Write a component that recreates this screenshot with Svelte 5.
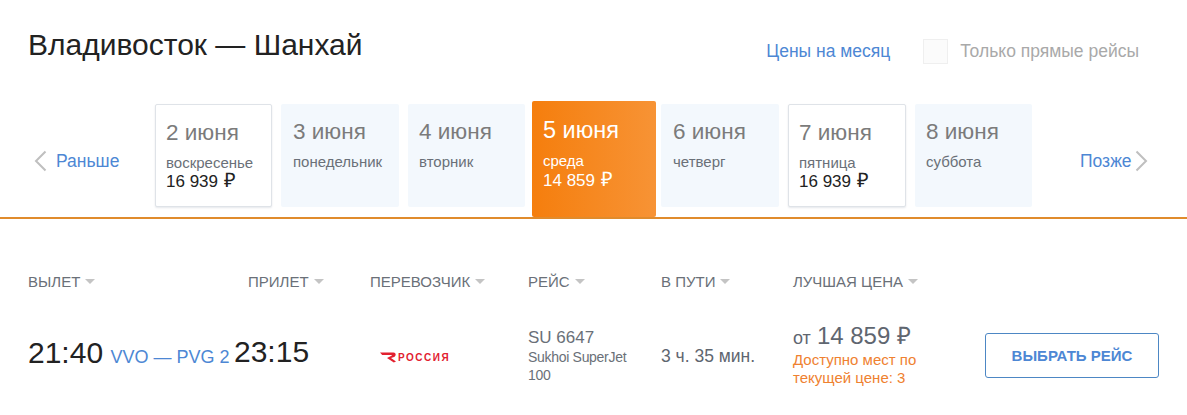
<script>
	const days = [
		{ date: '2 июня', name: 'воскресенье', price: '16 939', kind: 'priced' },
		{ date: '3 июня', name: 'понедельник' },
		{ date: '4 июня', name: 'вторник' },
		{ date: '5 июня', name: 'среда', price: '14 859', kind: 'active' },
		{ date: '6 июня', name: 'четверг' },
		{ date: '7 июня', name: 'пятница', price: '16 939', kind: 'priced' },
		{ date: '8 июня', name: 'суббота' },
	]

	const columns = ['ВЫЛЕТ', 'ПРИЛЕТ', 'ПЕРЕВОЗЧИК', 'РЕЙС', 'В ПУТИ', 'ЛУЧШАЯ ЦЕНА']
</script>

<div class="page">
	<header>
		<h1>Владивосток — Шанхай</h1>
		<a class="month" href="#month">Цены на месяц</a>
		<label class="direct">
			<span class="box"></span>
			Только прямые рейсы
		</label>
	</header>

	<nav class="strip">
		<a class="arrow prev" href="#prev">
			<svg width="14" height="22" viewBox="0 0 14 22"><path d="M12.5 1.5 3 11l9.5 9.5" fill="none" stroke="#bfbfbf" stroke-width="2"/></svg>
			Раньше
		</a>
		<div class="days">
			{#each days as day}
				<div class="day {day.kind || ''}">
					<div class="date">{day.date}</div>
					<div class="name">{day.name}</div>
					{#if day.price}
						<div class="price">{day.price} <span class="rub">₽</span></div>
					{/if}
				</div>
			{/each}
		</div>
		<a class="arrow next" href="#next">
			Позже
			<svg width="14" height="22" viewBox="0 0 14 22"><path d="M1.5 1.5 11 11l-9.5 9.5" fill="none" stroke="#bfbfbf" stroke-width="2"/></svg>
		</a>
	</nav>

	<div class="table">
		<div class="row head">
			{#each columns as col}
				<div class="th">{col}<i></i></div>
			{/each}
		</div>
		<div class="row flight">
			<div class="dep"><span class="time">21:40</span> <a href="#route">VVO — PVG 2</a></div>
			<div class="time arr">23:15</div>
			<div class="carrier">
				<svg width="70" height="14" viewBox="0 0 70 14">
					<path d="M1 2.5h13.5c2.6 0 3 3.4.6 4.4L12 8l5 3.6-2.2 1L8 8l4.5-2.2c.5-.3.4-.8-.2-.8H3.2z" fill="#e2212f"/>
					<text x="19" y="11" class="logo-text">РОССИЯ</text>
				</svg>
			</div>
			<div class="number">
				<div class="code">SU 6647</div>
				<div class="plane">Sukhoi SuperJet 100</div>
			</div>
			<div class="duration">3 ч. 35 мин.</div>
			<div class="best">
				<div class="from">от <b>14 859 ₽</b></div>
				<div class="seats">Доступно мест по текущей цене: 3</div>
			</div>
			<a class="choose" href="#choose">ВЫБРАТЬ РЕЙС</a>
		</div>
	</div>
</div>

<style>
	:global(body) {
		background: #fff;
	}

	.page {
		width: 1187px;
		height: 415px;
		overflow: hidden;
		font-family: "Liberation Sans", Arial, sans-serif;
		color: #222;
	}

	a {
		color: #4d87d4;
		text-decoration: none;
	}

	header {
		display: flex;
		align-items: center;
		height: 101px;
		padding: 0 48px 0 28px;
		box-sizing: border-box;
	}

	h1 {
		margin: 0 0 12px;
		font-size: 30px;
		font-weight: normal;
		color: #222;
		flex: 1;
	}

	.month {
		font-size: 17.5px;
		margin-right: 33px;
		margin-top: 1px;
	}

	.direct {
		display: flex;
		align-items: center;
		gap: 12px;
		font-size: 17.5px;
		color: #a9a9a9;
		margin-top: 1px;
	}

	.box {
		width: 23px;
		height: 23px;
		background: #fbfbfb;
		border: 1px solid #efefef;
	}

	.strip {
		display: flex;
		align-items: stretch;
		height: 118px;
		border-bottom: 2px solid #e08b2c;
		box-sizing: border-box;
	}

	.arrow {
		display: flex;
		align-items: center;
		font-size: 17.5px;
		height: 103px;
		margin-top: 5px;
		padding-top: 7px;
		box-sizing: border-box;
		gap: 9px;
	}

	.prev {
		width: 155px;
		padding-left: 33px;
	}

	.next {
		padding-left: 48px;
		gap: 3px;
	}

	.days {
		display: grid;
		grid-template-columns: 117px 118px 117px 118px 118px 118px 117px;
		gap: 9px;
		align-items: start;
	}

	.day {
		height: 103px;
		margin-top: 3px;
		padding: 15px 11px 0 12px;
		box-sizing: border-box;
		background: #f3f8fd;
		border-radius: 2px;
		color: #6e6e6e;
	}

	.day:nth-child(3),
	.day:nth-child(7) {
		padding-left: 11px;
	}

	.priced {
		background: #fff;
		border: 1px solid #dfe3e8;
		box-shadow: 0 1px 2px rgba(40, 60, 90, 0.12);
		padding: 15px 10px 0;
	}

	.active {
		width: 124px;
		height: 116px;
		margin: 0 -4px 0 -2px;
		padding: 16px 11px 0;
		background: linear-gradient(to right, #f57e0d, #f79335);
	}

	.date {
		font-size: 22.5px;
		line-height: 26px;
		color: #7b7b7b;
	}

	.name {
		font-size: 15px;
		line-height: 18px;
		margin-top: 8px;
		color: #6a7078;
	}

	.price {
		font-size: 17px;
		line-height: 19px;
		color: #222;
	}

	.rub {
		font-size: 20px;
		line-height: 0;
		margin-left: 1px;
	}

	.active .date,
	.active .name,
	.active .price {
		color: #fff;
	}

	.active .date {
		font-size: 23.5px;
	}

	.active .name {
		margin-top: 9px;
	}

	.active .price {
		margin-top: 1px;
	}

	.table {
		padding: 0 28px 0 29px;
	}

	.row {
		display: grid;
		grid-template-columns: 219px 122px 158px 133px 132px 192px 174px;
	}

	.head {
		margin-top: 52px;
		height: 20px;
		align-items: center;
	}

	.th {
		font-size: 15px;
		color: #6a7078;
		white-space: nowrap;
	}

	.th:first-child {
		margin-left: -1px;
	}

	.th i {
		display: inline-block;
		margin-left: 5px;
		vertical-align: 3px;
		border: 5px solid transparent;
		border-top-color: #c4c4c4;
		border-bottom-width: 0;
	}

	.flight {
		margin-top: 27px;
		align-items: center;
		height: 72px;
	}

	.time {
		font-size: 30px;
		color: #222;
	}

	.arr {
		margin-left: -14px;
		margin-top: -4px;
	}

	.dep {
		white-space: nowrap;
		margin-left: -1px;
		margin-top: -2px;
	}

	.dep a {
		font-size: 18px;
		margin-left: 3px;
	}

	.carrier {
		display: flex;
		padding-left: 9px;
		padding-top: 6px;
	}

	.logo-text {
		font-family: "Liberation Sans", Arial, sans-serif;
		font-size: 10px;
		font-weight: bold;
		letter-spacing: 1.5px;
		fill: #e2212f;
	}

	.number {
		color: #6a7078;
		padding-right: 20px;
		padding-top: 3px;
	}

	.code {
		font-size: 17px;
		line-height: 20px;
	}

	.plane {
		font-size: 14px;
		line-height: 18px;
		letter-spacing: -0.3px;
	}

	.duration {
		font-size: 17.5px;
		color: #5f6670;
		padding-top: 4px;
	}

	.from {
		font-size: 18px;
		color: #5f6670;
		line-height: 26px;
		margin-top: 2px;
	}

	.from b {
		font-weight: normal;
		font-size: 24px;
		margin-left: 1px;
	}

	.seats {
		font-size: 15px;
		line-height: 18px;
		color: #ef8130;
		width: 150px;
	}

	.choose {
		width: 174px;
		height: 45px;
		display: flex;
		align-items: center;
		justify-content: center;
		box-sizing: border-box;
		border: 1px solid #4d87c4;
		border-radius: 3px;
		font-size: 15px;
		font-weight: bold;
		margin-top: 2px;
	}
</style>
